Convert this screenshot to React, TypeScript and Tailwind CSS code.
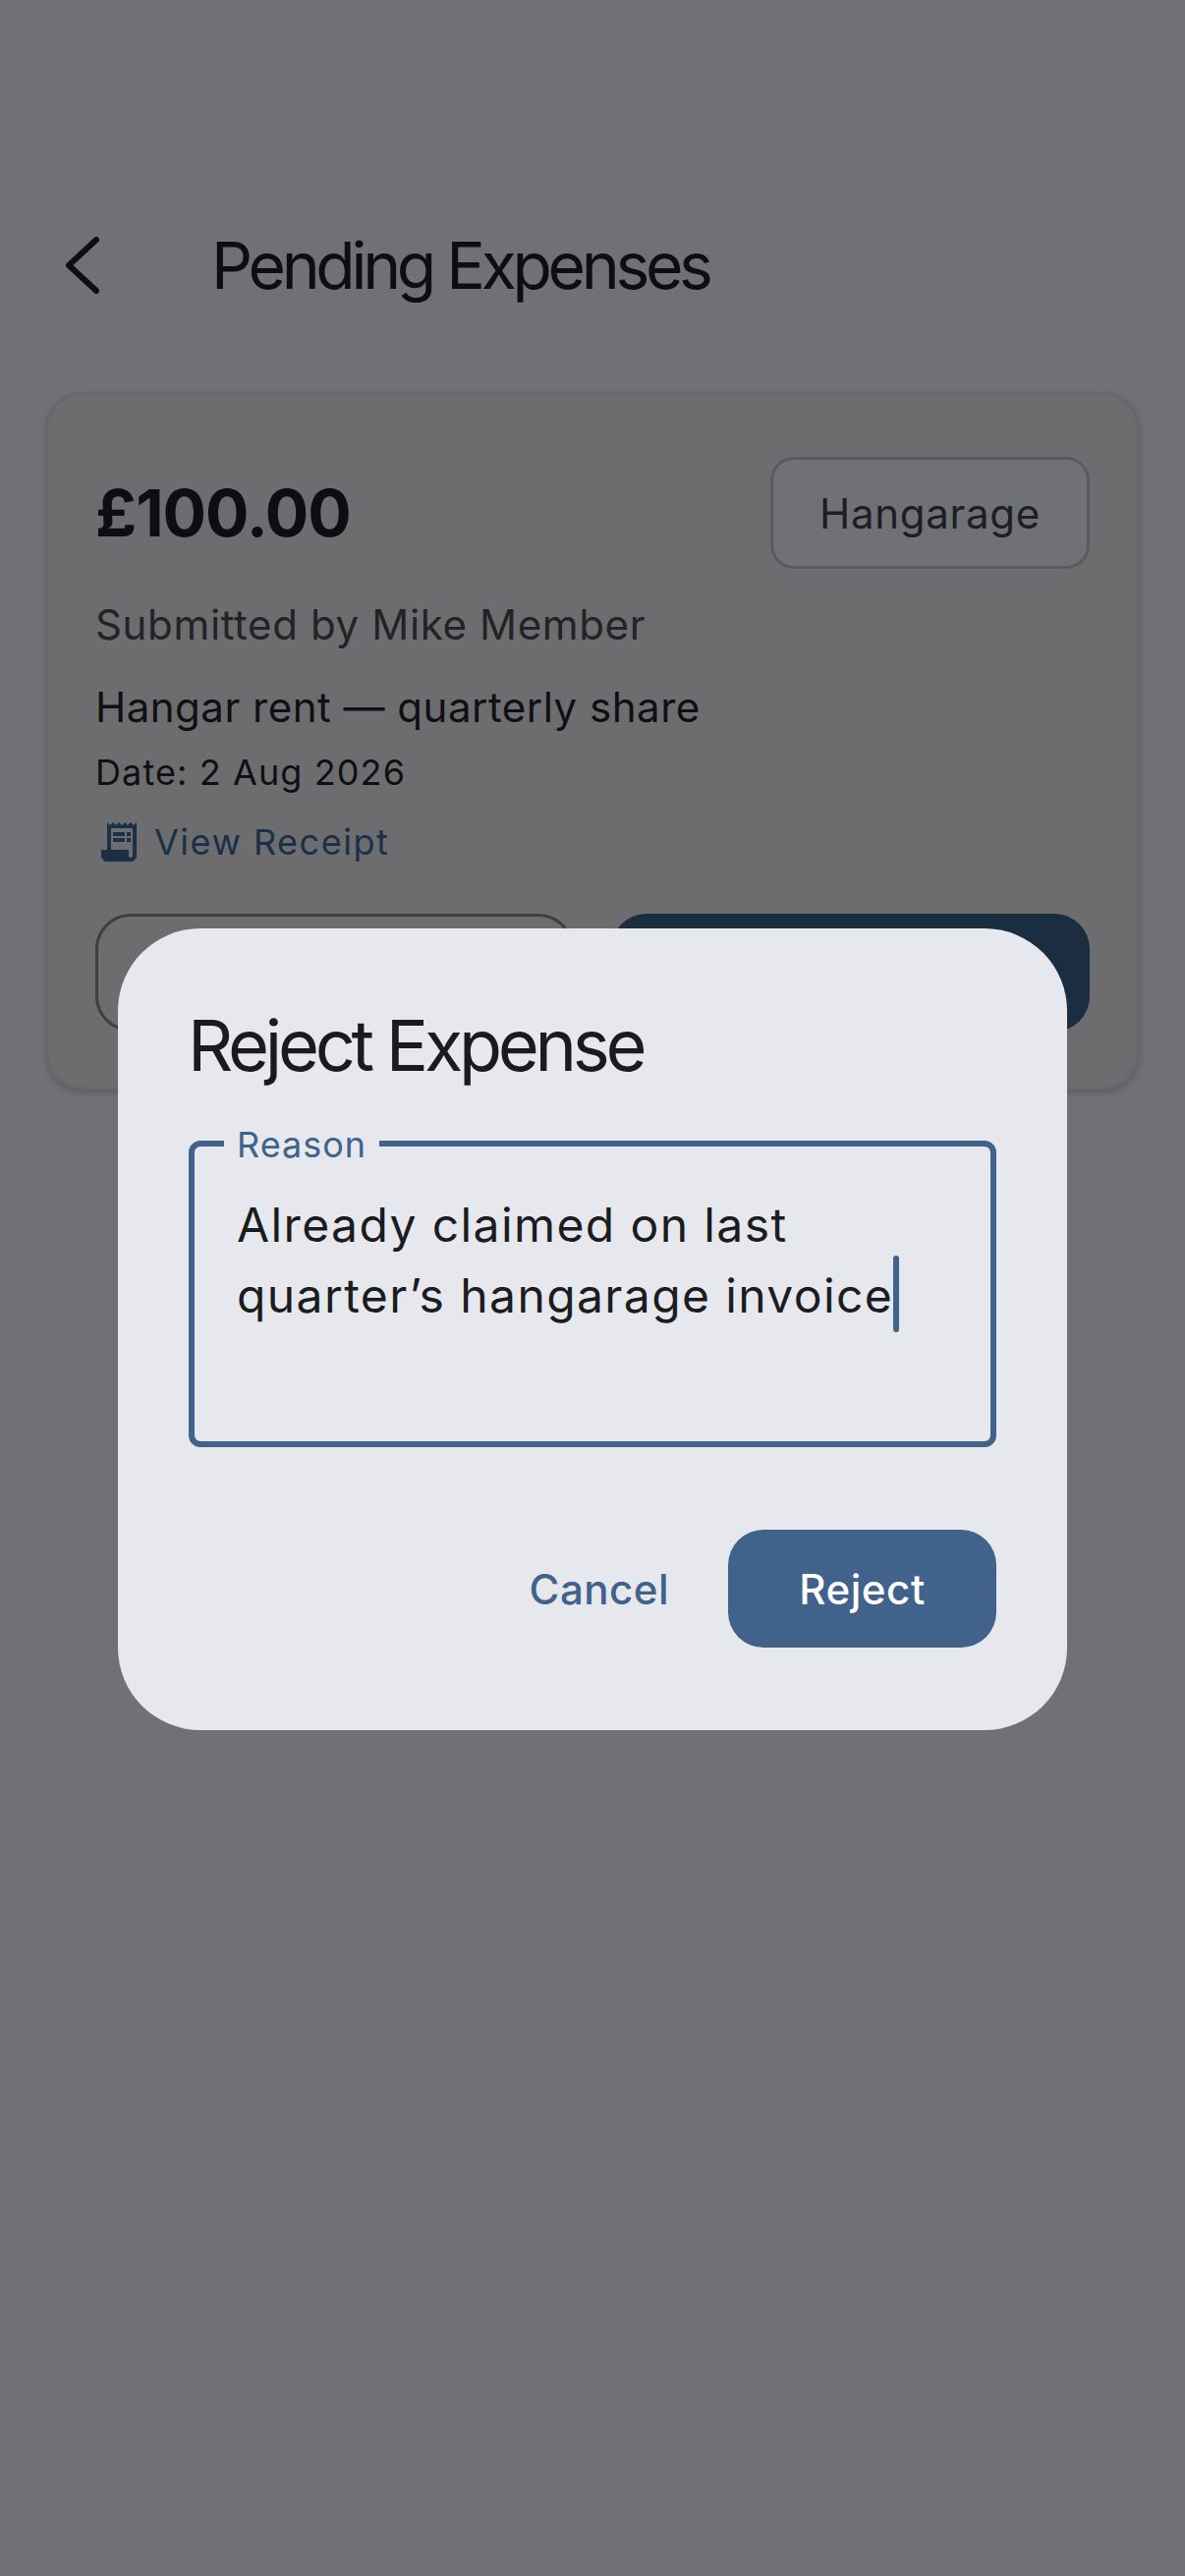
// App.tsx
function ReceiptIcon() {
  return (
    <svg viewBox="0 0 24 24" className="w-[48px] h-[48px] shrink-0 fill-[#1b2f46]">
      <path d="M19.5 3.5L18 2l-1.5 1.5L15 2l-1.5 1.5L12 2l-1.5 1.5L9 2 7.5 3.5 6 2v14H3v3c0 1.66 1.34 3 3 3h12c1.66 0 3-1.34 3-3V2l-1.5 1.5zM19 19c0 .55-.45 1-1 1s-1-.45-1-1v-3H8V5h11v14z" />
      <path d="M9 7h6v2H9zm7 0h2v2h-2zm-7 3h6v2H9zm7 0h2v2h-2z" />
    </svg>
  );
}

function ExpenseCard() {
  return (
    <div className="mx-[47px] mt-[89px] h-[710px] rounded-[36px] border-[3px] border-[#68686a] bg-[#6d6d6f] px-[47px] pt-[63px] shadow-[0_3px_6px_rgba(0,0,0,0.18)]">
      <div className="flex items-center justify-between">
        <div className="text-[66px] leading-[80px] font-bold tracking-[-1px] text-[#0d0e11]">£100.00</div>
        <div className="flex h-[114px] w-[325px] items-center justify-center rounded-[24px] border-[3px] border-[#5a5b5f] bg-[#707175] text-[42px] tracking-[0.7px] text-[#1d1e22]">
          Hangarage
        </div>
      </div>
      <div className="mt-[27px] text-[42px] leading-[60px] tracking-[0.65px] text-[#222327]">Submitted by Mike Member</div>
      <div className="mt-[24px] text-[42px] leading-[60px] tracking-[0.5px] text-[#0f1013]">Hangar rent — quarterly share</div>
      <div className="mt-[9px] text-[36px] leading-[54px] tracking-[1.1px] text-[#0f1013]">Date: 2 Aug 2026</div>
      <div className="mt-[17px] flex items-center gap-[12px]">
        <ReceiptIcon />
        <span className="text-[36px] tracking-[1.5px] text-[#1b2f46]">View Receipt</span>
      </div>
      <div className="mt-[46px] grid grid-cols-2 gap-[38px]">
        <div className="h-[120px] rounded-[36px] border-[3px] border-[#3f3f41]" />
        <div className="h-[120px] rounded-[36px] bg-[#1b2d40]" />
      </div>
    </div>
  );
}

function RejectDialog() {
  return (
    <div className="absolute inset-0 flex items-center justify-center pt-[84px]">
      <div className="flex h-[816px] w-[966px] flex-col rounded-[84px] bg-[#e7e8ee] px-[72px] pt-[77px]">
        <h2 className="-ml-[1px] text-[72px] leading-[84px] font-normal tracking-[-4.25px] text-[#191b20]">Reject Expense</h2>
        <div className="relative mt-[55px] h-[312px] rounded-[12px] border-[6px] border-[#40628b] pl-[43px] pt-[44px]">
          <span className="absolute left-[30px] top-[-20px] bg-[#e7e8ee] px-[13px] text-[36px] leading-[36px] tracking-[1px] text-[#40628b]">
            Reason
          </span>
          <div className="text-[48px] leading-[72px] tracking-[1.4px] text-[#1b1c20]">
            Already claimed on last
            <br />
            quarter’s hangarage invoice
            <span className="relative -top-[6px] inline-block h-[78px] w-[6px] rounded-[3px] bg-[#40628b] align-middle" />
          </div>
        </div>
        <div className="mt-[84px] flex items-center justify-end gap-[60px]">
          <button className="text-[42px] font-medium tracking-[0.5px] text-[#40628b]">Cancel</button>
          <button className="h-[120px] w-[273px] rounded-[36px] bg-[#40628b] text-[42px] font-medium tracking-[0.6px] text-white">
            Reject
          </button>
        </div>
      </div>
    </div>
  );
}

export default function App() {
  return (
    <div className="relative h-[2622px] w-[1206px] overflow-hidden bg-[#707175] font-['Inter',sans-serif]">
      <div className="flex items-center pt-[230px]">
        <svg viewBox="0 0 36 58" className="ml-[65px] h-[58px] w-[36px] fill-none stroke-[#0d0e11] stroke-[6px]">
          <path d="M33 3 5 29l28 26" strokeLinecap="round" strokeLinejoin="round" />
        </svg>
        <h1 className="ml-[114px] text-[66px] leading-[80px] font-normal tracking-[-4.3px] text-[#0d0e11]">Pending Expenses</h1>
      </div>
      <ExpenseCard />
      <RejectDialog />
    </div>
  );
}
